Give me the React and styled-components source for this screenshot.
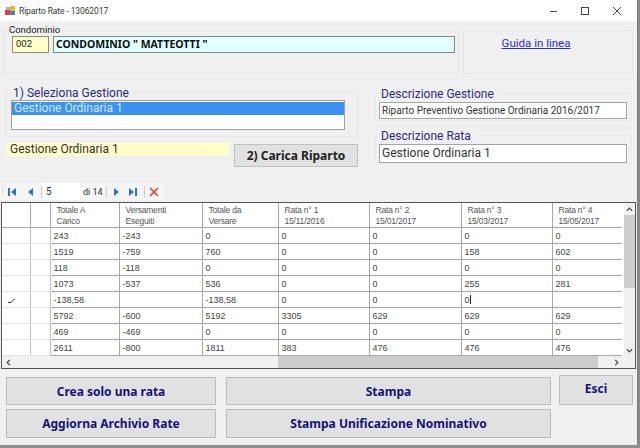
import React from 'react';
import styled, { createGlobalStyle } from 'styled-components';

const Global = createGlobalStyle`
  html, body { margin: 0; padding: 0; background: #8f8f8f; }
  * { box-sizing: border-box; }
`;
const FONT = `Roboto, "Noto Sans", sans-serif`;
const BOLD = `"Noto Sans", "DejaVu Sans", sans-serif`;
const NAVY = '#2c2a86';

const Window = styled.div`
  width: 637px; height: 445px; background: #f0f0f0; font-family: ${FONT};
  color: #333; overflow: hidden; box-shadow: 1px 1px 2px #777;
`;
const TitleBar = styled.div`
  height: 21px; background: #fff; display: flex; align-items: center; padding-left: 5px;
`;
const TitleText = styled.span` font-size: 8.5px; letter-spacing: -0.1px; margin-left: 4px; color: #333; flex: 1; `;
const WinButtons = styled.div` display: flex; padding-right: 4px; `;
const WinBtn = styled.div` width: 32px; height: 21px; display: flex; align-items: center; justify-content: center; `;

const TopRow = styled.div` display: flex; padding: 9px 3px 0 3px; gap: 4px; `;
const Group = styled.div`
  position: relative; border: 1px solid #e6e6e6; border-radius: 2px;
`;
const CondoGroup = styled(Group)` width: 456px; height: 44px; padding: 5px 3px 0 8px; display: flex; gap: 4px; align-items: flex-start; `;
const HelpGroup = styled(Group)` width: 170px; height: 44px; display: flex; justify-content: center; padding: 4px 24px 0 0; `;
const SmallLegend = styled.span`
  position: absolute; left: 5px; top: -7px; background: #f0f0f0; font-size: 9.5px; line-height: 12px; padding-right: 2px;
  color: #222;
`;
const CodeBox = styled.div`
  width: 37px; height: 17px; background: #ffffc8; border: 1px solid #8d8d7a; font-size: 9.5px; line-height: 14px; padding-left: 3px; color: #222;
`;
const NameBox = styled.div`
  width: 403px; height: 17px; background: #e0ffff; border: 1px solid #7d8a8a; font-family: ${BOLD}; font-size: 10.5px; font-weight: 700; line-height: 14px; padding-left: 2px; color: #111;
`;
const HelpLink = styled.a` font-size: 11.5px; color: #2a2ad8; text-decoration: underline; line-height: 16px; `;

const Middle = styled.div` display: flex; padding: 18px 5px 0 5px; justify-content: space-between; `;
const LeftCol = styled.div` width: 353px; display: flex; flex-direction: column; `;
const RightCol = styled.div` width: 257px; display: flex; flex-direction: column; gap: 14px; padding-top: 1px; `;
const SelectGroup = styled(Group)` height: 45px; padding: 7px 12px 0 5px; `;
const BigLegend = styled.span`
  position: absolute; left: 7px; top: -6px; background: #f0f0f0; font-size: 12px; line-height: 13px; color: ${NAVY}; padding-right: 4px;
`;
const ListBox = styled.div` height: 30px; background: #fff; border: 1px solid #a0a0a0; padding-top: 1px; `;
const ListItem = styled.div` height: 13px; background: #3a92f5; color: #d6e8fb; font-size: 12px; line-height: 13px; padding-left: 2px; `;
const LoadRow = styled.div` display: flex; padding: 6px 0 0 2px; gap: 5px; align-items: flex-start; `;
const YellowLabel = styled.div` width: 222px; height: 13px; background: #ffffc8; font-size: 12px; line-height: 13px; padding-left: 3px; color: #333; `;
const LoadButton = styled.div`
  width: 124px; height: 23px; margin-top: 1px; background: #e1e1e1; border: 1px solid #c0c0c0; font-family: ${BOLD}; font-size: 12px; font-weight: 700; text-align: center; line-height: 21px; color: #222;
`;
const DescGroup = styled(Group)` height: ${p => p.$h}px; padding: ${p => p.$pt}px 4px 0 3px; border-color: #e8e8e8; `;
const DescLegend = styled(BigLegend)` left: 5px; `;
const DescInput = styled.div`
  height: ${p => p.$h}px; background: #fff; border: 1px solid #a5a5a5; font-size: ${p => p.$fs}px; line-height: ${p => p.$h - 2}px; padding-left: 2px; color: #333; white-space: nowrap;
`;

const Toolbar = styled.div`
  width: 164px; height: 17px; margin-top: 16px; background: #f5f5f5; display: flex; align-items: center; padding-left: 2px;
`;
const Grip = styled.div` width: 1px; height: 9px; margin-right: 5px; flex: none; background: repeating-linear-gradient(#aaa 0 1px, transparent 1px 3px); `;
const ToolBtn = styled.svg` width: 9px; height: 10px; display: block; margin-right: ${p => p.$mr || 0}px; flex: none; `;
const ToolSep = styled.div` width: 1px; height: 12px; background: #ccc; margin-right: ${p => p.$mr || 0}px; flex: none; `;
const PageInput = styled.div` width: 37px; height: 17px; background: #fff; font-size: 10px; line-height: 17px; padding-left: 3px; color: #333; margin-right: 3px; flex: none; `;
const PageOf = styled.span` width: 23px; font-size: 9px; color: #333; white-space: nowrap; flex: none; `;
const DeleteIcon = styled.svg` width: 10px; height: 10px; flex: none; `;

const Grid = styled.div`
  width: 635px; height: 167px; margin: 2px 0 0 1px; background: #fff; border: 1px solid #555; display: flex; flex-direction: column;
`;
const GridMain = styled.div` flex: 1; display: flex; min-height: 0; `;
const Table = styled.table`
  width: 620px; table-layout: fixed; border-collapse: collapse; font-family: "Liberation Sans", sans-serif; flex: none; height: 152px;
`;
const HeadCell = styled.th`
  height: 24px; font-weight: 400; font-size: 8.5px; letter-spacing: -0.2px; line-height: 10.5px; text-align: left; padding: 2px 0 0 6px; color: #555;
  border-right: 1px solid #a8a8a8; border-bottom: 1px solid #a8a8a8; white-space: pre-line; vertical-align: middle;
  &:last-child { border-right: none; }
`;
const Cell = styled.td`
  height: 16px; font-size: 9px; line-height: 12px; padding: 1px 0 0 3px; color: #444; border-right: 1px solid #a8a8a8; border-bottom: 1px solid #a8a8a8; white-space: nowrap; overflow: hidden;
  &:last-child { border-right: none; }
`;
const RowHead = styled.td`
  border-right: 1px solid #c0c0c0; border-bottom: 1px solid #e4e4e4; padding: 0 0 0 6px; color: #333; vertical-align: middle; line-height: 5px;
`;
const Caret = styled.span` display: inline-block; width: 1px; height: 9px; background: #222; vertical-align: -1px; `;
const VScroll = styled.div`
  width: 11px; margin-left: 2px; background: #f0f0f0; display: flex; flex-direction: column; flex: none;
`;
const ArrowBox = styled.div` height: 12px; display: flex; align-items: center; justify-content: center; flex: none; `;
const VThumb = styled.div` height: 73px; background: #cdcdcd; `;
const VSpace = styled.div` flex: 1; `;
const HScroll = styled.div` height: 12px; background: #f0f0f0; display: flex; align-items: center; flex: none; `;
const HSpace = styled.div` width: ${p => p.$w}px; height: 12px; display: flex; align-items: center; padding-left: ${p => p.$pl}px; flex: none; `;
const HThumb = styled.div` width: 320px; height: 12px; background: #cdcdcd; flex: none; `;

const Actions = styled.div`
  display: grid; grid-template-columns: 210px 325px 72px; column-gap: 10px; row-gap: 4px; padding: 8px 0 0 6px;
  grid-template-rows: 28px 29px;
`;
const ActionBtn = styled.div`
  background: #e1e1e1; border: 1px solid #bdbdbd; color: #14147a; font-family: ${BOLD}; font-size: 12px; font-weight: 700;
  display: flex; align-items: center; justify-content: center;
`;
const ExitBtn = styled(ActionBtn)` margin: -2px 0 0 -2px; padding-bottom: 3px; `;

const Chevron = ({ d }) => (
  <svg width="7" height="7" viewBox="0 0 8 8" fill="none" stroke="#444" strokeWidth="1.4"><path d={d} /></svg>
);

const cols = [28, 20, 69, 83, 76, 91, 92, 91, 70];
const heads = ['', '', 'Totale A\nCarico', 'Versamenti\nEseguiti', 'Totale da\nVersare', 'Rata n° 1\n15/11/2016', 'Rata n° 2\n15/01/2017', 'Rata n° 3\n15/03/2017', 'Rata n° 4\n15/05/2017'];
const rows = [
  ['243', '-243', '0', '0', '0', '0', '0'],
  ['1519', '-759', '760', '0', '0', '158', '602'],
  ['118', '-118', '0', '0', '0', '0', '0'],
  ['1073', '-537', '536', '0', '0', '255', '281'],
  ['-138,58', '', '-138,58', '0', '0', '0|', ''],
  ['5792', '-600', '5192', '3305', '629', '629', '629'],
  ['469', '-469', '0', '0', '0', '0', '0'],
  ['2611', '-800', '1811', '383', '476', '476', '476'],
];

const NAV = '#2f74c0';

export default function App() {
  return (
    <>
      <Global />
      <Window>
        <TitleBar>
          <svg width="10" height="10" viewBox="0 0 10 10">
            <rect x="0" y="4" width="5" height="5" fill="#d8453a" />
            <rect x="5" y="0" width="5" height="5" fill="#e8b93a" />
            <rect x="5" y="5" width="5" height="4" fill="#4a80c8" />
            <rect x="1" y="1" width="4" height="3" fill="#9ab4d8" />
          </svg>
          <TitleText>Riparto Rate - 13062017</TitleText>
          <WinButtons>
            <WinBtn><svg width="10" height="10" viewBox="0 0 10 10"><path d="M2 5.5h7" stroke="#555" /></svg></WinBtn>
            <WinBtn><svg width="10" height="10" viewBox="0 0 10 10"><rect x="1.5" y="1.5" width="7" height="7" fill="none" stroke="#444" /></svg></WinBtn>
            <WinBtn><svg width="10" height="10" viewBox="0 0 10 10"><path d="M1 1l8 8M9 1l-8 8" stroke="#444" /></svg></WinBtn>
          </WinButtons>
        </TitleBar>

        <TopRow>
          <CondoGroup>
            <SmallLegend>Condominio</SmallLegend>
            <CodeBox>002</CodeBox>
            <NameBox>CONDOMINIO " MATTEOTTI "</NameBox>
          </CondoGroup>
          <HelpGroup><HelpLink>Guida in linea</HelpLink></HelpGroup>
        </TopRow>

        <Middle>
          <LeftCol>
            <SelectGroup>
              <BigLegend>1) Seleziona Gestione</BigLegend>
              <ListBox><ListItem>Gestione Ordinaria 1</ListItem></ListBox>
            </SelectGroup>
            <LoadRow>
              <YellowLabel>Gestione Ordinaria 1</YellowLabel>
              <LoadButton>2) Carica Riparto</LoadButton>
            </LoadRow>
          </LeftCol>
          <RightCol>
            <DescGroup $h={28} $pt={8}>
              <DescLegend>Descrizione Gestione</DescLegend>
              <DescInput $h={17} $fs={10}>Riparto Preventivo Gestione Ordinaria 2016/2017</DescInput>
            </DescGroup>
            <DescGroup $h={29} $pt={8}>
              <DescLegend>Descrizione Rata</DescLegend>
              <DescInput $h={19} $fs={12}>Gestione Ordinaria 1</DescInput>
            </DescGroup>
          </RightCol>
        </Middle>

        <Toolbar>
          <Grip />
          <ToolBtn $mr={10} viewBox="0 0 9 10"><path d="M0 1h2v8H0zM8 1v8L3 5z" fill={NAV} /></ToolBtn>
          <ToolBtn $mr={5} viewBox="0 0 9 10"><path d="M6 1v8L1 5z" fill={NAV} /></ToolBtn>
          <ToolSep $mr={1} />
          <PageInput>5</PageInput>
          <PageOf>di 14</PageOf>
          <ToolSep $mr={6} />
          <ToolBtn $mr={7} viewBox="0 0 9 10"><path d="M1 1v8l5-4z" fill={NAV} /></ToolBtn>
          <ToolBtn $mr={6} viewBox="0 0 9 10"><path d="M0 1v8l5-4zM6 1h2v8H6z" fill={NAV} /></ToolBtn>
          <ToolSep $mr={4} />
          <DeleteIcon viewBox="0 0 10 10"><path d="M1 1l8 8M9 1l-8 8" stroke="#e04030" strokeWidth="1.6" /></DeleteIcon>
        </Toolbar>

        <Grid>
          <GridMain>
            <Table>
              <colgroup>
                {cols.map((w, i) => <col key={i} style={{ width: w }} />)}
              </colgroup>
              <thead>
                <tr>{heads.map((h, i) => <HeadCell key={i}>{h}</HeadCell>)}</tr>
              </thead>
              <tbody>
                {rows.map((r, i) => (
                  <tr key={i}>
                    <RowHead>
                      {i === 4 && <svg width="8" height="5" viewBox="0 0 8 5"><path d="M0 4.5h3l4-4" stroke="#333" fill="none" /></svg>}
                    </RowHead>
                    <RowHead />
                    {r.map((c, j) => (
                      <Cell key={j}>{c === '0|' ? <>0<Caret /></> : c}</Cell>
                    ))}
                  </tr>
                ))}
              </tbody>
            </Table>
            <VScroll>
              <ArrowBox><Chevron d="M1 5.5l3-3 3 3" /></ArrowBox>
              <VThumb />
              <VSpace />
              <ArrowBox><Chevron d="M1 2.5l3 3 3-3" /></ArrowBox>
            </VScroll>
          </GridMain>
          <HScroll>
            <HSpace $w={276} $pl={3}><Chevron d="M5.5 1l-3 3 3 3" /></HSpace>
            <HThumb />
            <HSpace $w={36} $pl={15}><Chevron d="M2.5 1l3 3-3 3" /></HSpace>
          </HScroll>
        </Grid>

        <Actions>
          <ActionBtn>Crea solo una rata</ActionBtn>
          <ActionBtn>Stampa</ActionBtn>
          <ExitBtn>Esci</ExitBtn>
          <ActionBtn>Aggiorna Archivio Rate</ActionBtn>
          <ActionBtn>Stampa Unificazione Nominativo</ActionBtn>
        </Actions>
      </Window>
    </>
  );
}
